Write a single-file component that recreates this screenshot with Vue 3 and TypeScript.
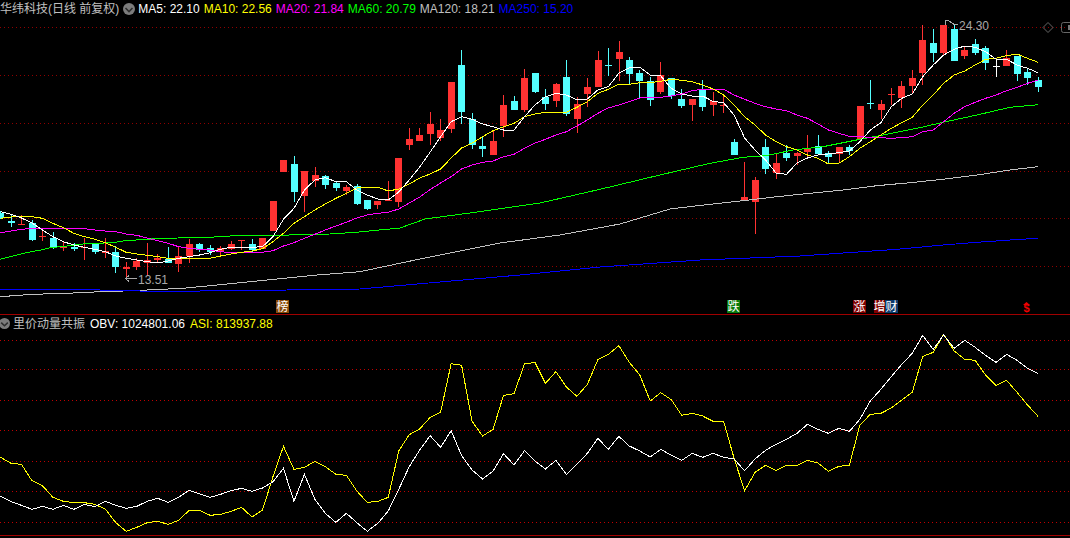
<script setup lang="ts">
type Candle = [string, number, number, number, number]

const candleData: Candle[] = [
  ['c', 211, 213, 218, 219], ['c', 215, 220.7, 222.7, 227], ['r', 215, 224, 225, 225], ['c', 220, 223, 240, 241],
  ['r', 231, 236, 237, 241], ['c', 232, 238, 247, 249], ['r', 241, 247, 248, 251], ['c', 243, 247, 249, 251],
  ['r', 238, 247, 248, 260], ['c', 243, 244, 252, 254], ['r', 238, 251, 253, 258], ['c', 246, 252, 267, 273],
  ['r', 262, 267, 269, 280], ['r', 258, 261, 267, 270], ['r', 243, 260, 263, 276], ['r', 254, 258, 260, 263],
  ['c', 247, 259, 263, 263], ['r', 246, 256, 264, 272], ['r', 239, 244, 256, 263], ['c', 243, 244, 250, 252],
  ['c', 245, 248, 252, 255], ['r', 246, 248, 252, 257], ['r', 241, 244, 249, 250], ['r', 240, 240, 241, 250],
  ['c', 239, 244, 250, 253], ['r', 238, 238, 249, 249], ['r', 201, 201, 231, 231], ['r', 160, 160, 172, 172],
  ['c', 156, 164, 192, 202], ['r', 171, 171, 196, 212], ['r', 167, 175, 181, 187], ['c', 175, 176, 185, 189],
  ['c', 182, 183, 188, 191], ['r', 185, 187, 191, 195], ['c', 184, 186, 204, 205], ['c', 200, 200, 209, 210],
  ['r', 201, 201, 205, 209], ['r', 181, 200, 201, 201], ['r', 158, 158, 202, 207], ['r', 128, 139, 145, 150],
  ['r', 128, 135, 141, 141], ['r', 112, 124, 134, 145], ['r', 119, 130, 138, 141], ['r', 82, 82, 129, 133],
  ['c', 50, 65, 112, 124], ['c', 113, 119, 145, 149], ['c', 137, 146, 149, 157], ['r', 130, 141, 155, 155],
  ['r', 95, 105, 126, 137], ['c', 96, 101, 110, 110], ['r', 69, 78, 110, 112], ['c', 73, 73, 92, 93],
  ['c', 89, 97, 104, 110], ['r', 83, 84, 101, 107], ['c', 60, 77, 114, 116], ['r', 97, 104, 119, 133],
  ['r', 78, 87, 94, 107], ['r', 51, 60, 87, 87], ['c', 48, 65, 66, 76], ['r', 41, 52, 59, 81],
  ['c', 57, 60, 74, 85], ['c', 70, 73, 81, 98], ['c', 77, 81, 100, 106], ['r', 62, 75, 92, 94],
  ['c', 78, 78, 96, 99], ['c', 89, 99, 106, 108], ['r', 99, 99, 105, 121], ['c', 80, 89, 107, 111],
  ['r', 92, 101, 105, 116], ['r', 96, 105, 106, 113], ['c', 139, 142, 155, 155], ['r', 162, 197, 200, 200],
  ['r', 177, 180, 202, 234], ['c', 139, 147, 169, 174], ['r', 154, 163, 173, 179], ['c', 145, 153, 158, 161],
  ['r', 152, 153, 156, 165], ['r', 135, 148, 152, 159], ['c', 135, 146, 154, 154], ['c', 151, 153, 157, 164],
  ['r', 147, 147, 154, 163], ['c', 145, 147, 151, 155], ['r', 106, 106, 139, 139], ['c', 80, 103, 104, 109],
  ['r', 100, 104, 110, 119], ['r', 88, 94, 95, 105], ['r', 81, 86, 98, 108], ['r', 70, 78, 86, 94],
  ['r', 25, 40, 73, 85], ['c', 29, 43, 53, 62], ['r', 25, 25, 53, 56], ['c', 24, 29, 61, 61],
  ['r', 47, 50, 56, 59], ['c', 39, 44, 53, 55], ['c', 46, 48, 63, 70], ['w', 60, 66, 67, 77],
  ['r', 50, 58, 66, 66], ['c', 56, 56, 74, 81], ['c', 68, 72, 78, 85], ['c', 77, 80, 87, 92],
]

const ma5 = [211.6, 214.3, 218, 223, 230, 236.7, 241.7, 245, 247.3, 249.3, 251.7, 256, 258.3, 260, 261.7, 263, 261, 258.3, 256.7, 255, 252.7, 249.3, 247.3, 247.3, 247.3, 246.7, 236.7, 219.3, 208.3, 190, 180, 177.7, 181.7, 181.7, 190, 195, 199, 200, 192, 180, 167, 152, 136.7, 121.7, 116.7, 119.3, 124, 126.7, 130, 130, 116.7, 105, 96.7, 93.3, 95, 100, 99, 90, 86.7, 73.3, 67.7, 67.3, 75, 76, 88.3, 94, 96, 96, 101.5, 102.7, 115, 138, 150, 160, 173, 174.3, 163, 158, 155, 154, 152.7, 151, 141.7, 130, 122.7, 106.7, 98.3, 94, 76.7, 65, 55, 49.3, 46, 47.3, 51.7, 59.3, 59.3, 65, 68.3, 72.7]
const ma10 = [218.3, 217, 216.3, 216.7, 218.3, 223.3, 227.7, 233.3, 236.7, 239.3, 242.7, 247.3, 252.3, 254, 255.3, 256.7, 258.3, 258.3, 258.3, 258.3, 258.3, 256, 254, 252.3, 251, 248.7, 241.7, 233.3, 223.3, 216.7, 210, 204, 198.3, 193.3, 188, 187.3, 187.3, 191, 189, 184, 178, 174, 169, 158, 148, 143, 136.7, 130.7, 126.7, 123.3, 116.7, 114, 112.3, 112.3, 112.3, 107.3, 101.7, 93.3, 89.3, 84.3, 84.3, 82.7, 82.7, 81.3, 79.3, 80.3, 81.7, 85, 89, 95, 105, 116.7, 125, 135, 141.7, 146.7, 150, 155, 158.3, 164, 163.3, 156.7, 148.3, 141.7, 135, 128.3, 122.7, 117.3, 105, 95, 83.3, 75, 71, 65, 59.3, 58.3, 55.7, 54, 58.3, 62.3]
const ma20 = [232.7, 231, 229.3, 228.3, 228.3, 228.7, 228.3, 228.7, 228.7, 230, 231, 231.7, 234, 235.3, 238, 240.7, 243.3, 246.7, 248.3, 249.3, 250, 251.7, 252.7, 252.7, 252.7, 252.3, 250.7, 246, 242.7, 238.3, 234.3, 230, 226, 222.3, 218, 215, 213.3, 212.3, 209, 203, 197, 189.5, 183, 176.7, 169, 165, 162.3, 161, 156.7, 154.3, 148.3, 143, 139.3, 135, 131.7, 126, 120, 113.3, 108, 105, 101.7, 98, 97.3, 97.3, 96, 94, 90.7, 89.3, 89.3, 89.3, 95, 99.3, 103.3, 106.7, 109, 110.7, 115, 118.3, 124, 130, 133.3, 136.3, 136.7, 137.3, 137.7, 138.3, 137.7, 136.7, 131.7, 130, 121.7, 113.3, 106.7, 102.3, 98.3, 95, 90.7, 87.3, 83.3, 80]

const pts = (list: number[][]) => list.map((p) => p.join(',')).join(' ')
const byIndex = (ys: number[]) => pts(ys.map((y, i) => [i * 10.48 + 0.5, y]))

const maLines = [
  { cls: 'gray', points: pts([[0, 296.7], [33, 294.3], [67, 293.3], [100, 291.7], [133, 290.7], [183, 288.3], [217, 285], [267, 280], [317, 275], [360, 271.7], [420, 259], [500, 243], [560, 235], [620, 224], [670, 209], [710, 204.3], [743, 200.7], [777, 196.7], [810, 193.3], [843, 190], [877, 185.7], [910, 182.7], [943, 179.3], [977, 175], [1010, 170], [1038, 166.7]]) },
  { cls: 'blue', points: pts([[0, 289.5], [100, 290], [140, 291], [200, 291], [287, 290], [360, 289], [440, 282], [520, 275], [600, 267], [700, 260], [800, 256], [897, 249.3], [943, 245], [977, 242.3], [1010, 240], [1038, 238.3]]) },
  { cls: 'green', points: pts([[0, 259.3], [10, 256.7], [21, 254], [31, 251.7], [41, 250], [52, 247.3], [62, 246.7], [73, 245.3], [83, 244], [94, 243.7], [104, 243], [115, 242.3], [125, 240.7], [136, 240], [146, 239.3], [157, 238.7], [167, 238.3], [178, 238], [200, 237.7], [220, 236.7], [230, 236], [262, 235.7], [283, 235.3], [304, 234.3], [330, 234], [356, 232.3], [400, 228], [425, 219], [470, 213], [540, 203], [600, 189.3], [660, 175], [710, 163.3], [743, 157.3], [766, 155.7], [793, 150], [823, 146.7], [860, 139.3], [887, 134.3], [917, 128.3], [943, 122.3], [977, 115], [1010, 107.3], [1038, 104.7]]) },
  { cls: 'magenta', points: byIndex(ma20) },
  { cls: 'yellow', points: byIndex(ma10) },
  { cls: 'white', points: byIndex(ma5) },
]

const candles = candleData.map(([kind, high, top, bottom, low], i) => {
  const cx = Math.round(0.2 + i * 10.48)
  return { id: i, kind, cx, high, top, low, height: Math.max(1, Math.round(bottom - top)), wick: Math.max(1, low - high) }
})

const marks = [
  { text: '榜', x: 276, width: 13, cls: 'brown' },
  { text: '跌', x: 727, width: 13, cls: 'leaf' },
  { text: '涨', x: 853, width: 13, cls: 'wine' },
  { text: '增', x: 874, width: 11, cls: 'wine' },
  { text: '财', x: 885, width: 13, cls: 'navy' },
]

const mainGrid = [27, 75, 123, 171, 218, 266]
const subGrid = [340, 369, 400, 430, 461, 491, 522]

const legends = [
  { cls: 'c-white', text: 'MA5: 22.10' },
  { cls: 'c-yellow', text: 'MA10: 22.56' },
  { cls: 'c-magenta', text: 'MA20: 21.84' },
  { cls: 'c-green', text: 'MA60: 20.79' },
  { cls: 'c-gray', text: 'MA120: 18.21' },
  { cls: 'c-blue', text: 'MA250: 15.20' },
]

const asiLeft = [352, 370, 373, 422, 437, 472, 484, 488, 488, 493, 507, 548, 574, 562, 548, 544, 553, 541, 511, 511, 526, 523, 514, 502, 531, 510, 410, 319, 388, 382, 364, 380, 403, 406, 453, 487, 484, 472, 333, 284, 267, 232, 216, 71, 76, 244, 288, 268, 166, 161, 72].map((v) => 340 + v / 3)
const asiRight = [112, 175, 140, 186, 214, 178, 104, 88, 62, 112, 150, 228, 203, 224, 271, 265, 273, 289, 289, 400, 497, 442, 421, 437, 421, 421, 406, 414, 439, 424, 421, 300, 268, 265, 249, 225, 202, 94, 82, 28, 78, 103, 106, 150, 182, 166, 202, 240, 274].map((v) => 325 + v / 3)
const obvLeft = [469, 485, 496, 508, 499, 508, 496, 508, 493, 500, 484, 496, 505, 499, 484, 475, 487, 472, 451, 462, 472, 463, 452, 445, 454, 444, 425, 385, 484, 403, 478, 520, 547, 520, 548, 574, 550, 513, 448, 380, 330, 287, 322, 272, 347, 390, 417, 393, 341, 375, 332].map((v) => 340 + v / 3)
const obvRight = [408, 432, 406, 448, 417, 385, 340, 373, 334, 363, 378, 396, 373, 391, 406, 385, 397, 385, 397, 402, 437, 402, 376, 358, 343, 325, 298, 313, 325, 310, 319, 283, 228, 193, 155, 118, 85, 31, 73, 30, 70, 46, 67, 91, 112, 88, 106, 130, 146].map((v) => 325 + v / 3)

const asiPoints = byIndex([...asiLeft, ...asiRight])
const obvPoints = byIndex([...obvLeft, ...obvRight])
</script>

<template>
  <div class="terminal">
    <section class="panel main-panel">
      <header class="legend">
        <span class="title">华纬科技(日线 前复权)</span>
        <svg class="toggle" width="12" height="12" viewBox="0 0 12 12">
          <circle cx="6" cy="6" r="6" fill="#7c7c7c" />
          <path d="M2.5 5 6 8.5 9.5 5" fill="none" stroke="#2e2e2e" stroke-width="1.6" />
        </svg>
        <span v-for="item in legends" :key="item.text" :class="item.cls">{{ item.text }}</span>
      </header>
      <svg class="chart main-chart" width="1070" height="296" viewBox="0 18 1070 296">
        <line v-for="y in mainGrid" :key="y" class="grid dim" x1="0" x2="1070" :y1="y + 0.5" :y2="y + 0.5" />
        <g v-for="c in candles" :key="c.id" :class="'candle ' + c.kind">
          <rect :x="c.cx" :y="c.high" width="1" :height="c.wick" />
          <rect :x="c.cx - 3" :y="c.top" width="7" :height="c.height" />
        </g>
        <polyline v-for="line in maLines" :key="line.cls" :class="'ma ' + line.cls" :points="line.points" />
        <path class="note-line" d="M125 278.5H137M125.5 278.5 129 275.5M125.5 278.5 129 281.5" />
        <text class="note" x="138" y="284">13.51</text>
        <path class="note-line" d="M945.5 25V20.5H948.5L953.5 24H958" />
        <text class="note" x="959" y="30">24.30</text>
        <path class="tool" d="M1048 22.5 1053 27.5 1048 32.5 1043 27.5Z" />
        <rect class="tool" x="1061.5" y="22.5" width="14" height="10" rx="2" />
        <rect class="tool-fill" x="1068" y="25" width="3" height="5" />
        <g v-for="m in marks" :key="m.text" class="mark">
          <rect :class="m.cls" :x="m.x" y="300" :width="m.width" height="13" />
          <text :x="m.x + m.width / 2" y="311">{{ m.text }}</text>
        </g>
        <polygon class="dollar" points="1026.5,302 1030,305 1023,305" />
        <text class="dollar dollar-text" x="1026.5" y="312">$</text>
      </svg>
    </section>
    <section class="panel sub-panel">
      <header class="legend sub-legend">
        <svg class="toggle small" width="11" height="11" viewBox="0 0 11 11">
          <circle cx="5.5" cy="5.5" r="5.5" fill="#7c7c7c" />
          <path d="M2.2 4.6 5.5 7.8 8.8 4.6" fill="none" stroke="#2e2e2e" stroke-width="1.5" />
        </svg>
        <span class="title">里价动量共振</span>
        <span class="c-white">OBV: 1024801.06</span>
        <span class="c-yellow">ASI: 813937.88</span>
      </header>
      <svg class="chart" width="1070" height="206" viewBox="0 332 1070 206">
        <line v-for="y in subGrid" :key="y" class="grid" x1="0" x2="1070" :y1="y + 0.5" :y2="y + 0.5" />
        <polyline class="ma yellow" :points="asiPoints" />
        <polyline class="ma white" :points="obvPoints" />
        <line class="base" x1="0" x2="1070" y1="535.5" y2="535.5" />
      </svg>
    </section>
  </div>
</template>

<style scoped>
.terminal {
  width: 1070px;
  height: 538px;
  background: #000;
  overflow: hidden;
  display: flex;
  flex-direction: column;
  font-family: "Liberation Sans", "Noto Sans CJK SC", sans-serif;
  font-size: 12px;
}
.panel {
  display: flex;
  flex-direction: column;
}
.main-panel {
  height: 315px;
  border-bottom: 1px solid #a00000;
  box-sizing: border-box;
}
.sub-panel {
  height: 223px;
}
.legend {
  height: 18px;
  display: flex;
  align-items: center;
  gap: 4px;
  white-space: nowrap;
  line-height: 18px;
  flex: none;
}
.sub-legend {
  height: 17px;
  gap: 5px;
}
.title {
  color: #c0c0c0;
  margin-right: 1px;
}
.sub-legend .title {
  margin-right: 0;
}
.toggle {
  flex: none;
  margin-left: -1px;
  margin-right: -1px;
}
.toggle.small {
  margin-right: -2px;
}
.chart {
  display: block;
  flex: none;
  overflow: visible;
}
.c-white { color: #fff; }
.c-yellow { color: #ff0; }
.c-magenta { color: #f0f; }
.c-green { color: #0f0; }
.c-gray { color: #c0c0c0; }
.c-blue { color: #00f; }
.grid {
  stroke: #c00000;
  stroke-width: 1;
  stroke-dasharray: 1 3;
  shape-rendering: crispEdges;
}
.grid.dim {
  stroke: #900000;
}
.base {
  stroke: #a00000;
  stroke-width: 1;
  shape-rendering: crispEdges;
}
.candle rect {
  shape-rendering: crispEdges;
}
.candle.r rect { fill: #ff3232; }
.candle.c rect { fill: #54ffff; }
.candle.w rect { fill: #fff; }
.ma {
  fill: none;
  stroke-width: 1;
  shape-rendering: crispEdges;
}
.white { stroke: #fff; }
.yellow { stroke: #ff0; }
.magenta { stroke: #f0f; }
.green { stroke: #0f0; }
.gray { stroke: #c0c0c0; }
.blue { stroke: #00f; }
.note {
  fill: #a8a8a8;
  font-size: 12px;
}
.note-line {
  fill: none;
  stroke: #a8a8a8;
  stroke-width: 1;
  shape-rendering: crispEdges;
}
.tool {
  fill: none;
  stroke: #666;
  stroke-width: 1;
}
.tool-fill {
  fill: #777;
}
.mark rect {
  shape-rendering: crispEdges;
}
.mark text {
  fill: #fff;
  font-size: 12px;
  text-anchor: middle;
}
.brown { fill: #8a4a08; }
.leaf { fill: #0a7a0a; }
.wine { fill: #7f0000; }
.navy { fill: #0c3a6c; }
.dollar {
  fill: #f00000;
}
.dollar-text {
  font-size: 11px;
  font-weight: bold;
  text-anchor: middle;
}
</style>
